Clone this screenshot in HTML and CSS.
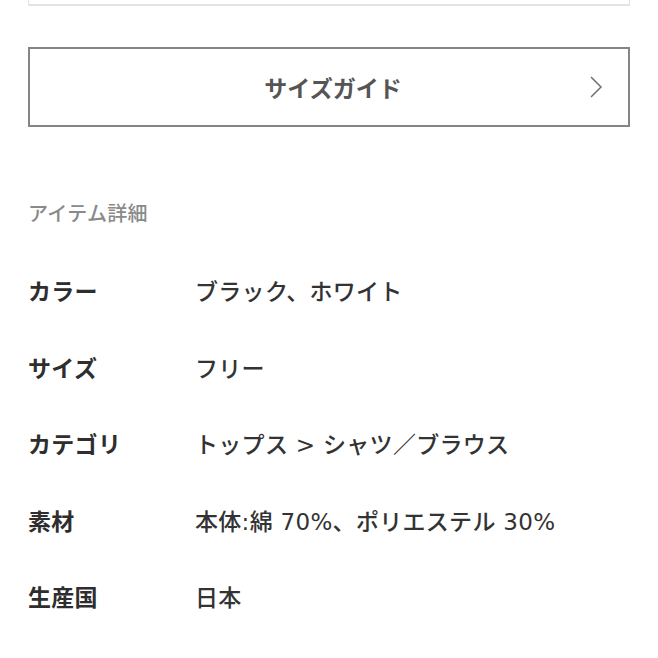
FILE: index.html
```html
<!DOCTYPE html>
<html lang="ja">
<head>
<meta charset="utf-8">
<link rel="stylesheet" href="styles.css">
</head>
<body>
<div class="page">
  <div class="top-box"></div>
  <a class="guide-btn">
    <span class="spacer"></span>
    <span class="guide-label">サイズガイド</span>
    <svg class="chev" width="14" height="24" viewBox="0 0 14 24"><polyline points="2,2 12,12 2,22" fill="none" stroke="#707070" stroke-width="1.5"/></svg>
  </a>
  <h2 class="heading">アイテム詳細</h2>
  <dl class="details">
    <div class="row"><dt>カラー</dt><dd>ブラック、ホワイト</dd></div>
    <div class="row"><dt>サイズ</dt><dd>フリー</dd></div>
    <div class="row"><dt>カテゴリ</dt><dd>トップス &gt; シャツ／ブラウス</dd></div>
    <div class="row"><dt>素材</dt><dd>本体:綿 70%、ポリエステル 30%</dd></div>
    <div class="row"><dt>生産国</dt><dd>日本</dd></div>
  </dl>
</div>
</body>
</html>
```
FILE: styles.css
```css
html, body {
  margin: 0;
  padding: 0;
  background: #fff;
}
body {
  font-family: "Noto Sans CJK JP", "Noto Sans", sans-serif;
  color: #333;
}
.page {
  padding: 0 28px;
  width: 602px;
}
.top-box {
  height: 4px;
  border: 1px solid #e4e4e4;
  border-top: none;
  border-bottom-width: 2px;
}
.guide-btn {
  margin-top: 41px;
  height: 76px;
  border: 2px solid #858585;
  display: grid;
  grid-template-columns: 1fr auto 1fr;
  align-items: center;
  padding: 0 25px 0 33px;
}
.guide-label {
  font-size: 23px;
  font-weight: 700;
  color: #555;
}
.chev {
  justify-self: end;
}
.heading {
  margin: 72px 0 0 0;
  font-size: 20px;
  line-height: 28px;
  font-weight: 500;
  color: #8a8a8a;
  letter-spacing: 0.3px;
}
.details {
  margin: 25px 0 0 0;
}
.row {
  display: flex;
  align-items: center;
  height: 76.5px;
}
.row dt {
  width: 167px;
  font-size: 23px;
  font-weight: 700;
  color: #2e2e2e;
  letter-spacing: 0.3px;
}
.row dd {
  margin: 0;
  font-family: "DejaVu Sans", "Noto Sans CJK JP", sans-serif;
  font-size: 23px;
  font-weight: 500;
  color: #333;
  letter-spacing: 0.3px;
}
```
